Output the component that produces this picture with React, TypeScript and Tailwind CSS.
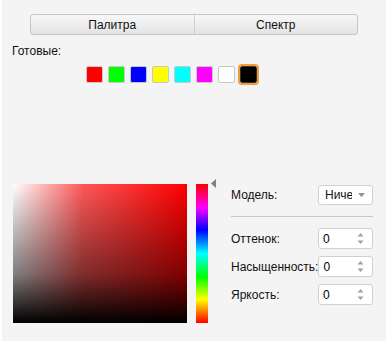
import React from "react";

const swatches = ["#ff0000", "#00ff00", "#0000ff", "#ffff00", "#00ffff", "#ff00ff", "#ffffff", "#000000"];

function Spin() {
  return (
    <div className="flex h-[21px] w-[55px] shrink-0 items-center justify-between rounded-[3px] border border-[#d0d0d0] bg-white pl-[4px] pr-[8px]">
      <span className="text-[12px] text-[#000]">0</span>
      <svg width="7" height="13" viewBox="0 0 7 13">
        <path d="M0.5 4.5 L3.5 1 L6.5 4.5 Z" fill="#a0a0a0" />
        <path d="M0.5 8.5 L3.5 12 L6.5 8.5 Z" fill="#a0a0a0" />
      </svg>
    </div>
  );
}

export default function App() {
  return (
    <div className="h-[348px] w-[390px] bg-white" style={{ fontFamily: '"Liberation Sans", "DejaVu Sans", sans-serif' }}>
      <div className="ml-[2px] flex h-[341px] w-[384px] flex-col bg-[#f4f4f4] text-[12px] text-[#111]">
        <div className="ml-[28px] mt-[14px] flex h-[21px] w-[328px] overflow-hidden rounded-[3px] border border-[#c6c6c6] bg-gradient-to-b from-[#f8f8f8] to-[#e3e3e3]">
          <div className="flex flex-1 items-center justify-center border-r border-[#d0d0d0]">Палитра</div>
          <div className="flex flex-1 items-center justify-center">Спектр</div>
        </div>
        <div className="ml-[10px] mt-[8px] leading-[16px]">Готовые:</div>
        <div className="ml-[84px] mt-[7px] flex gap-[5px]">
          {swatches.map((c, i) => (
            <div
              key={c}
              className={
                i === 7
                  ? "h-[17px] w-[17px] rounded-[2px] border border-[#333] outline-2 outline-[#f29c3c] outline-offset-0"
                  : "h-[17px] w-[17px] rounded-[2px] border border-[#c8c8c8]"
              }
              style={{ background: c }}
            />
          ))}
        </div>
        <div className="mt-[101px] flex">
          <div
            className="ml-[11px] h-[139px] w-[174px] shrink-0"
            style={{
              background:
                "linear-gradient(to top, #000, rgba(0,0,0,0.5) 35%, rgba(0,0,0,0)), linear-gradient(to right, #fff, rgba(255,255,255,0.35) 40%, rgba(255,255,255,0)), #ff0000",
            }}
          />
          <div
            className="ml-[9px] h-[139px] w-[12px] shrink-0"
            style={{
              background:
                "linear-gradient(to bottom, #ff0000, #ff00ff 17%, #0000ff 33%, #00ffff 50%, #00ff00 67%, #ffff00 83%, #ff0000)",
            }}
          />
          <svg className="-mt-[5px] ml-[3px] shrink-0" width="5" height="9" viewBox="0 0 5 9">
            <path d="M5 0 L0 4.5 L5 9 Z" fill="#808080" />
          </svg>
          <div className="ml-[15px] mt-[1px] flex w-[142px] shrink-0 flex-col">
            <div className="flex items-center justify-between">
              <span>Модель:</span>
              <div className="flex h-[20px] w-[55px] shrink-0 items-center justify-between rounded-[3px] border border-[#d0d0d0] bg-white pl-[6px] pr-[7px]">
                <span className="w-[27px] overflow-hidden whitespace-nowrap">Ничего</span>
                <svg width="7" height="4" viewBox="0 0 7 4">
                  <path d="M0 0 L7 0 L3.5 4 Z" fill="#909090" />
                </svg>
              </div>
            </div>
            <div className="mt-[11px] h-px bg-[#c8c8c8]" />
            <div className="mt-[11px] flex items-center justify-between">
              <span>Оттенок:</span>
              <Spin />
            </div>
            <div className="mt-[7px] flex items-center justify-between">
              <span>Насыщенность:</span>
              <Spin />
            </div>
            <div className="mt-[7px] flex items-center justify-between">
              <span>Яркость:</span>
              <Spin />
            </div>
          </div>
        </div>
      </div>
    </div>
  );
}
